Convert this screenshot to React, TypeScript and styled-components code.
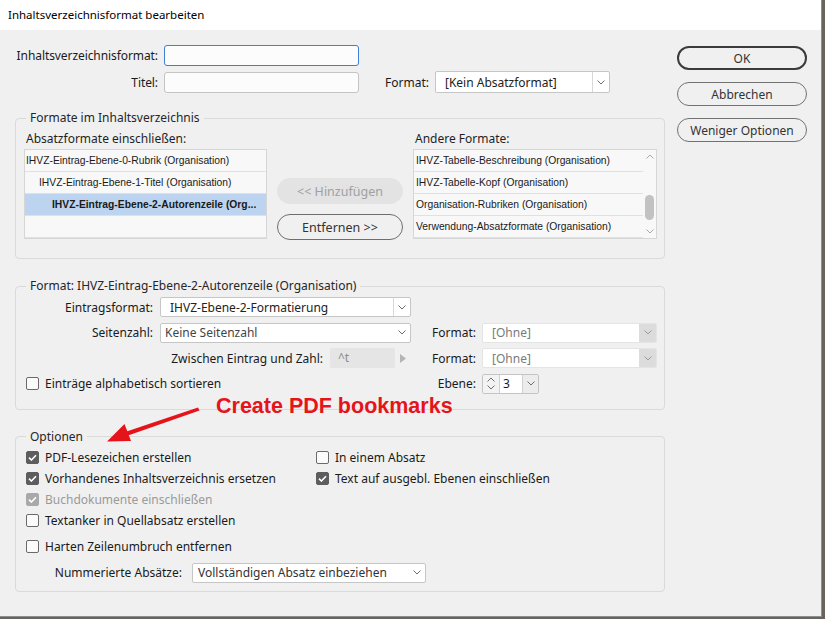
import styled, { createGlobalStyle } from 'styled-components';

const GlobalStyle = createGlobalStyle`
  html, body {
    margin: 0;
    padding: 0;
    background: #66645b;
  }
  body {
    font-family: "Noto Sans", "Liberation Sans", sans-serif;
    font-size: 12px;
    color: #1f1f1f;
  }
  * { box-sizing: border-box; }
`

const Dialog = styled.div`
  position: relative;
  width: 822px;
  height: 617px;
  background: #f0f0f0;
  border-right: 1px solid #8e8e8e;
  border-bottom: 1px solid #8e8e8e;
  display: flex;
  flex-direction: column;
`

const TitleBar = styled.div`
  height: 30px;
  background: #fff;
  padding-left: 8px;
  line-height: 30px;
  font-size: 11.5px;
  color: #000;
`

const Body = styled.div`
  display: flex;
  padding-left: 15px;
`

const Main = styled.div`
  width: 650px;
  display: flex;
  flex-direction: column;
`

const Side = styled.div`
  width: 130px;
  margin-left: 12px;
  padding-top: 16px;
  display: flex;
  flex-direction: column;
  gap: 12px;
`

const PillButton = styled.button<{ $primary?: boolean }>`
  height: 24px;
  width: 130px;
  border-radius: 12px;
  border: ${p => (p.$primary ? '2px solid #3b3b3b' : '1px solid #727272')};
  background: transparent;
  font: inherit;
  font-size: 12px;
  color: #333;
  padding: 0;
`

const TopRow = styled.div<{ $top: number }>`
  display: flex;
  align-items: center;
  margin-top: ${p => p.$top}px;
`

const TopLabel = styled.label`
  width: 143px;
  text-align: right;
  margin-right: 6px;
  color: #1a1a1a;
  letter-spacing: -0.08px;
`

const TextInput = styled.div<{ $focus?: boolean }>`
  width: 195px;
  height: 21px;
  background: #fcfcfc;
  border: 1px solid ${p => (p.$focus ? '#3f7fd8' : '#c4c4c4')};
  border-radius: 3px;
`

const InlineLabel = styled.span<{ $left: number }>`
  margin-left: ${p => p.$left}px;
  margin-right: 6px;
  color: #1a1a1a;
`

const SelectBox = styled.div<{ $w: number; $h: number; $muted?: boolean }>`
  width: ${p => p.$w}px;
  height: ${p => p.$h}px;
  display: flex;
  background: #fff;
  border: 1px solid ${p => (p.$muted ? '#e4e4e4' : '#c6c6c6')};
  border-radius: 2px;
  overflow: hidden;
`

const SelectText = styled.span<{ $indent: number; $color: string }>`
  flex: 1;
  display: flex;
  align-items: center;
  padding-left: ${p => p.$indent}px;
  color: ${p => p.$color};
  white-space: nowrap;
  overflow: hidden;
`

const SelectArrow = styled.span<{ $split?: boolean; $muted?: boolean }>`
  width: 17px;
  display: flex;
  align-items: center;
  justify-content: center;
  border-left: ${p => (p.$split ? '1px solid #d8d8d8' : 'none')};
  background: ${p => (p.$muted ? '#dcdcdc' : 'transparent')};
`

const Group = styled.fieldset<{ $gap: number }>`
  margin: ${p => p.$gap}px 0 0 0;
  padding: 0;
  min-width: 0;
  border: 1px solid #dadada;
  border-radius: 4px;
`

const Legend = styled.legend`
  margin-left: 10px;
  padding: 0 4px;
  line-height: 16px;
  font-size: 12px;
  color: #262626;
`

const FormatsGrid = styled.div`
  display: grid;
  grid-template-columns: 243px 126px 244px;
  column-gap: 10px;
  padding: 5px 0 18px 8px;
`

const ColLabel = styled.div`
  line-height: 16px;
  margin-bottom: 2px;
  padding-left: 2px;
  color: #1f1f1f;
`

const List = styled.div`
  height: 90px;
  display: flex;
  background: #f8f8f8;
  border: 1px solid #d6d6d6;
`

const ListRows = styled.div`
  flex: 1;
  display: flex;
  flex-direction: column;
`

const ListRow = styled.div<{ $level?: number; $selected?: boolean; $pad?: number }>`
  height: 22px;
  flex-shrink: 0;
  line-height: 21px;
  padding-left: ${p => (p.$pad ?? 1) + (p.$level ?? 0) * 13}px;
  font-family: "Liberation Sans", Arial, sans-serif;
  font-size: 10.3px;
  font-weight: ${p => (p.$selected ? 700 : 400)};
  color: #1a1a1a;
  background: ${p => (p.$selected ? '#bcd4ef' : 'transparent')};
  border-bottom: 1px solid #e1e1e1;
  white-space: nowrap;
  overflow: hidden;
`

const ScrollTrack = styled.div`
  width: 13px;
  display: flex;
  flex-direction: column;
  align-items: center;
  padding: 4px 0;
`

const ScrollThumb = styled.div`
  width: 9px;
  height: 25px;
  margin-top: 36px;
  border-radius: 5px;
  background: #c2c2c2;
`

const Spacer = styled.div`
  flex: 1;
`

const ActionColumn = styled.div`
  display: flex;
  flex-direction: column;
  gap: 10px;
  padding-top: 29px;
`

const ActionButton = styled.button<{ $disabled?: boolean }>`
  height: 26px;
  width: 126px;
  border-radius: 13px;
  font: inherit;
  font-size: 12.5px;
  padding: 0;
  border: ${p => (p.$disabled ? '1px solid #e3e3e3' : '1px solid #6e6e6e')};
  background: ${p => (p.$disabled ? '#e3e3e3' : 'transparent')};
  color: ${p => (p.$disabled ? '#a0a0a0' : '#333')};
`

const EntryGrid = styled.div`
  display: grid;
  grid-template-columns: 134px 251px 71px 175px;
  grid-auto-rows: 20px;
  row-gap: 5.5px;
  padding: 3px 7px 15px 10px;
  align-items: center;
`

const FieldLabel = styled.span<{ $pad: number }>`
  text-align: right;
  padding-right: ${p => p.$pad}px;
  color: #1a1a1a;
  white-space: nowrap;
`

const SpanCell = styled.div<{ $end?: boolean }>`
  grid-column: 1 / 3;
  display: flex;
  align-items: center;
  justify-content: ${p => (p.$end ? 'flex-end' : 'flex-start')};
  height: 20px;
`

const SpacerText = styled.span`
  color: #1a1a1a;
  margin-right: 7px;
`

const DisabledInput = styled.div`
  width: 65px;
  height: 20px;
  background: #e5e5e5;
  border-radius: 2px;
  color: #8c8c8c;
  padding-left: 8px;
  line-height: 20px;
  font-size: 12px;
`

const Nudge = styled.span`
  display: flex;
  margin: 0 5px;
`

const Spinner = styled.div`
  width: 57px;
  height: 20px;
  display: flex;
  border: 1px solid #c4c4c4;
  border-radius: 2px;
  overflow: hidden;
`

const SpinArrows = styled.div`
  width: 17px;
  display: flex;
  flex-direction: column;
  align-items: center;
  justify-content: center;
  gap: 3px;
  background: #f3f3f3;
  border-right: 1px solid #d0d0d0;
`

const SpinValue = styled.div`
  width: 22px;
  background: #fff;
  padding-left: 3px;
  line-height: 18px;
  color: #1a1a1a;
`

const SpinDrop = styled.div`
  flex: 1;
  display: flex;
  align-items: center;
  justify-content: center;
  background: #ececec;
  border-left: 1px solid #d0d0d0;
`

const OptionsGrid = styled.div`
  display: grid;
  grid-template-columns: 290px 1fr;
  grid-template-rows: repeat(4, 21px);
  grid-auto-flow: column;
  padding: 2px 0 0 10px;
`

const CheckRow = styled.label<{ $top?: number; $pad?: number; $muted?: boolean }>`
  display: flex;
  align-items: center;
  gap: 6px;
  height: 21px;
  margin-top: ${p => p.$top ?? 0}px;
  padding-left: ${p => p.$pad ?? 0}px;
  color: ${p => (p.$muted ? '#9a9a9a' : '#1a1a1a')};
  white-space: nowrap;
`

const Box = styled.span<{ $checked?: boolean; $muted?: boolean }>`
  width: 13px;
  height: 13px;
  border-radius: 2px;
  display: flex;
  align-items: center;
  justify-content: center;
  flex-shrink: 0;
  background: ${p => (p.$checked ? (p.$muted ? '#a9a9a9' : '#5d5d5d') : '#fbfbfb')};
  border: 1px solid ${p => (p.$checked ? (p.$muted ? '#a9a9a9' : '#5d5d5d') : '#6a6a6a')};
`

const NumberRow = styled.div`
  display: flex;
  align-items: center;
  margin-top: 6px;
  padding: 0 0 8px 10px;
`

const NumberLabel = styled.span`
  width: 156px;
  text-align: right;
  margin-right: 10px;
  color: #1a1a1a;
`

const Callout = styled.div`
  position: absolute;
  left: 216px;
  top: 393px;
  font-family: "Liberation Sans", Arial, sans-serif;
  font-weight: 700;
  font-size: 21.5px;
  line-height: 26px;
  color: #e5141b;
  white-space: nowrap;
`

const CalloutArrow = styled.svg`
  position: absolute;
  left: 0;
  top: 0;
  pointer-events: none;
`

const Chevron = ({ color = '#6e6e6e' }: { color?: string }) => (
  <svg width="8" height="5" viewBox="0 0 8 5">
    <path d="M0.5 0.5 L4 4 L7.5 0.5" fill="none" stroke={color} strokeWidth="1" />
  </svg>
)

const ChevronUp = ({ color = '#6e6e6e' }: { color?: string }) => (
  <svg width="8" height="5" viewBox="0 0 8 5">
    <path d="M0.5 4.5 L4 1 L7.5 4.5" fill="none" stroke={color} strokeWidth="1" />
  </svg>
)

const Tick = () => (
  <svg width="9" height="7" viewBox="0 0 9 7">
    <path d="M1 3.6 L3.4 6 L8 1.2" fill="none" stroke="#fff" strokeWidth="1.6" />
  </svg>
)

type SelectProps = {
  w: number
  h?: number
  value: string
  indent: number
  color?: string
  split?: boolean
  muted?: boolean
}

function Select({ w, h = 20, value, indent, color = '#222', split, muted }: SelectProps) {
  return (
    <SelectBox $w={w} $h={h} $muted={muted}>
      <SelectText $indent={indent} $color={color}>{value}</SelectText>
      <SelectArrow $split={split} $muted={muted}>
        <Chevron color={muted ? '#9a9a9a' : '#6e6e6e'} />
      </SelectArrow>
    </SelectBox>
  )
}

function Check({ label, checked, muted, top, pad }: { label: string; checked?: boolean; muted?: boolean; top?: number; pad?: number }) {
  return (
    <CheckRow $top={top} $pad={pad} $muted={muted}>
      <Box $checked={checked} $muted={muted}>{checked ? <Tick /> : null}</Box>
      {label}
    </CheckRow>
  )
}

const included = [
  { name: 'IHVZ-Eintrag-Ebene-0-Rubrik (Organisation)', level: 0 },
  { name: 'IHVZ-Eintrag-Ebene-1-Titel (Organisation)', level: 1 },
  { name: 'IHVZ-Eintrag-Ebene-2-Autorenzeile (Org...', level: 2, selected: true },
]

const others = [
  'IHVZ-Tabelle-Beschreibung (Organisation)',
  'IHVZ-Tabelle-Kopf (Organisation)',
  'Organisation-Rubriken (Organisation)',
  'Verwendung-Absatzformate (Organisation)',
]

export default function App() {
  return (
    <>
      <GlobalStyle />
      <Dialog>
        <TitleBar>Inhaltsverzeichnisformat bearbeiten</TitleBar>
        <Body>
          <Main>
            <TopRow $top={15}>
              <TopLabel>Inhaltsverzeichnisformat:</TopLabel>
              <TextInput $focus />
            </TopRow>
            <TopRow $top={5}>
              <TopLabel>Titel:</TopLabel>
              <TextInput />
              <InlineLabel $left={26}>Format:</InlineLabel>
              <Select w={175} h={22} value="[Kein Absatzformat]" indent={9} split />
            </TopRow>

            <Group $gap={17}>
              <Legend>Formate im Inhaltsverzeichnis</Legend>
              <FormatsGrid>
                <ColLabel>Absatzformate einschließen:</ColLabel>
                <div />
                <ColLabel>Andere Formate:</ColLabel>
                <List>
                  <ListRows>
                    {included.map(item => (
                      <ListRow key={item.name} $level={item.level} $selected={item.selected}>
                        {item.name}
                      </ListRow>
                    ))}
                    <ListRow />
                  </ListRows>
                </List>
                <ActionColumn>
                  <ActionButton $disabled>&lt;&lt; Hinzufügen</ActionButton>
                  <ActionButton>Entfernen &gt;&gt;</ActionButton>
                </ActionColumn>
                <List>
                  <ListRows>
                    {others.map(name => (
                      <ListRow key={name} $pad={2}>{name}</ListRow>
                    ))}
                  </ListRows>
                  <ScrollTrack>
                    <ChevronUp color="#a8a8a8" />
                    <ScrollThumb />
                    <Spacer />
                    <Chevron color="#a8a8a8" />
                  </ScrollTrack>
                </List>
              </FormatsGrid>
            </Group>

            <Group $gap={19}>
              <Legend>Format: IHVZ-Eintrag-Ebene-2-Autorenzeile (Organisation)</Legend>
              <EntryGrid>
                <FieldLabel $pad={7}>Eintragsformat:</FieldLabel>
                <Select w={251} value="IHVZ-Ebene-2-Formatierung" indent={9} split />
                <div />
                <div />

                <FieldLabel $pad={7}>Seitenzahl:</FieldLabel>
                <Select w={251} value="Keine Seitenzahl" indent={4} color="#444" />
                <FieldLabel $pad={6}>Format:</FieldLabel>
                <Select w={175} value="[Ohne]" indent={9} color="#7a7a7a" muted />

                <SpanCell $end>
                  <SpacerText>Zwischen Eintrag und Zahl:</SpacerText>
                  <DisabledInput>^t</DisabledInput>
                  <Nudge>
                    <svg width="6" height="9" viewBox="0 0 6 9">
                      <path d="M0 0 L6 4.5 L0 9 Z" fill="#b4b4b4" />
                    </svg>
                  </Nudge>
                </SpanCell>
                <FieldLabel $pad={6}>Format:</FieldLabel>
                <Select w={175} value="[Ohne]" indent={9} color="#7a7a7a" muted />

                <SpanCell>
                  <Check label="Einträge alphabetisch sortieren" />
                </SpanCell>
                <FieldLabel $pad={6}>Ebene:</FieldLabel>
                <Spinner>
                  <SpinArrows>
                    <ChevronUp />
                    <Chevron />
                  </SpinArrows>
                  <SpinValue>3</SpinValue>
                  <SpinDrop>
                    <Chevron />
                  </SpinDrop>
                </Spinner>
              </EntryGrid>
            </Group>

            <Group $gap={19}>
              <Legend>Optionen</Legend>
              <OptionsGrid>
                <Check label="PDF-Lesezeichen erstellen" checked />
                <Check label="Vorhandenes Inhaltsverzeichnis ersetzen" checked />
                <Check label="Buchdokumente einschließen" checked muted />
                <Check label="Textanker in Quellabsatz erstellen" />
                <Check label="In einem Absatz" />
                <Check label="Text auf ausgebl. Ebenen einschließen" checked />
              </OptionsGrid>
              <Check label="Harten Zeilenumbruch entfernen" top={5} pad={10} />
              <NumberRow>
                <NumberLabel>Nummerierte Absätze:</NumberLabel>
                <Select w={234} value="Vollständigen Absatz einbeziehen" indent={5} color="#333" />
              </NumberRow>
            </Group>
          </Main>

          <Side>
            <PillButton $primary>OK</PillButton>
            <PillButton>Abbrechen</PillButton>
            <PillButton>Weniger Optionen</PillButton>
          </Side>
        </Body>

        <Callout>Create PDF bookmarks</Callout>
        <CalloutArrow width="822" height="617" viewBox="0 0 822 617">
          <path d="M198 407.5 L199.5 410.5 L128 435.5 L126.5 431.5 Z" fill="#e5141b" />
          <path d="M107 441.5 L131 441 L124.5 424 Z" fill="#e5141b" />
        </CalloutArrow>
      </Dialog>
    </>
  )
}
